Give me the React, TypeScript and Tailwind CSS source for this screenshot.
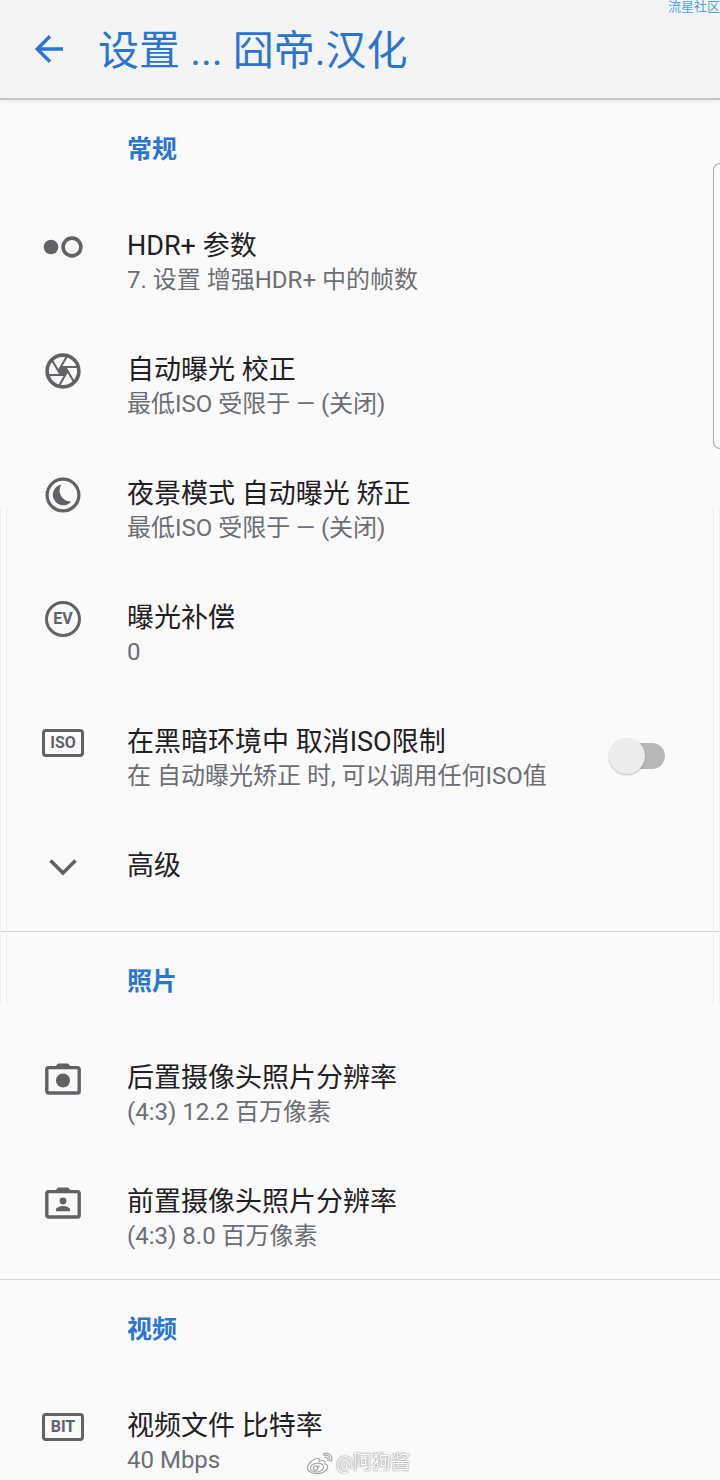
import React, { useState } from 'react';

interface SettingItem {
  id: string;
  title: string;
  summary?: string;
  icon: React.ReactNode;
  toggle?: boolean;
}

interface SettingSection {
  id: string;
  title: string;
  items: SettingItem[];
}

const HdrIcon = () => (
  <svg width="40" height="22" viewBox="0 0 40 22" aria-hidden="true">
    <circle cx="8" cy="11" r="7.3" fill="currentColor" />
    <circle cx="29" cy="11" r="8.9" fill="none" stroke="currentColor" strokeWidth="3.6" />
  </svg>
);

const ApertureIcon = () => (
  <svg width="36" height="36" viewBox="-18 -18 36 36" fill="none" stroke="currentColor" aria-hidden="true">
    <circle r="15.9" strokeWidth="3.6" />
    <path d="M5 0L2.5 4.3H-2.5L-5 0L-2.5 -4.3H2.5Z" fill="currentColor" stroke="none" />
    {[0, 60, 120, 180, 240, 300].map(angle => (
      <path key={angle} d="M-14.5 4H2.3" strokeWidth="2" transform={`rotate(${angle})`} />
    ))}
  </svg>
);

const NightIcon = () => (
  <svg width="36" height="36" viewBox="0 0 36 36" aria-hidden="true">
    <circle cx="18" cy="18" r="15.9" fill="none" stroke="currentColor" strokeWidth="3.2" />
    <path d="M16.5 7.6A10.4 10.4 0 1 0 26.3 24.4A10.8 10.8 0 0 1 16.5 7.6Z" fill="currentColor" />
  </svg>
);

const EvIcon = () => (
  <span className="flex size-9 items-center justify-center rounded-full border-3 border-current text-base font-bold leading-none">
    EV
  </span>
);

const LabelIcon: React.FC<{ text: string }> = ({ text }) => (
  <span className="flex h-7 w-[42px] items-center justify-center rounded border-3 border-current text-base font-bold leading-none">
    {text}
  </span>
);

const ChevronIcon = () => (
  <svg width="28" height="18" viewBox="0 0 28 18" fill="none" stroke="currentColor" strokeWidth="3.6" aria-hidden="true">
    <path d="M1.5 2.5L14 15L26.5 2.5" />
  </svg>
);

const RearCameraIcon = () => (
  <svg width="36" height="34" viewBox="0 0 36 34" aria-hidden="true">
    <path d="M10 5L13 1.5H23L26 5Z" fill="currentColor" />
    <rect x="1.8" y="5.6" width="32.4" height="25.4" rx="1.8" fill="none" stroke="currentColor" strokeWidth="3.4" />
    <circle cx="18" cy="18.5" r="7" fill="currentColor" />
  </svg>
);

const FrontCameraIcon = () => (
  <svg width="36" height="34" viewBox="0 0 36 34" aria-hidden="true">
    <path d="M10 5L13 1.5H23L26 5Z" fill="currentColor" />
    <rect x="1.8" y="5.6" width="32.4" height="25.4" rx="1.8" fill="none" stroke="currentColor" strokeWidth="3.4" />
    <circle cx="18" cy="15" r="3.4" fill="currentColor" />
    <path d="M11 25.2V23.6C11 21.2 15.5 20 18 20S25 21.2 25 23.6V25.2Z" fill="currentColor" />
  </svg>
);

const WeiboIcon = () => (
  <svg width="28" height="24" viewBox="0 0 28 24" fill="none" stroke="#a3a3a3" strokeWidth="1.1" aria-hidden="true">
    <path
      d="M11 7.2C8 7.5 1.5 12.6 1.5 16.6C1.5 20.4 6.3 22.6 11 22.6C17.4 22.6 21.6 19 21.6 16C21.6 14.2 20.1 13.2 18.8 12.8C19.6 10.2 18.2 8.4 13.2 10.2C13.8 8.2 13 7 11 7.2Z"
      fill="#fff"
    />
    <ellipse cx="11" cy="16.6" rx="6.6" ry="4.4" transform="rotate(-8 11 16.6)" />
    <circle cx="9.6" cy="17.2" r="2.2" />
    <circle cx="12.6" cy="15.6" r="0.6" />
    <path d="M17.6 2.6C22.6 0.8 27.4 5.2 25.6 10.2L23.8 9.8C25 6.4 21.8 3.2 18 4.4Z" fill="#fff" />
    <path d="M18.4 6.6C20.8 5.8 22.8 7.8 22 10" />
  </svg>
);

const SECTIONS: SettingSection[] = [
  {
    id: 'general',
    title: '常规',
    items: [
      { id: 'hdr', title: 'HDR+ 参数', summary: '7. 设置 增强HDR+ 中的帧数', icon: <HdrIcon /> },
      { id: 'exposure', title: '自动曝光 校正', summary: '最低ISO 受限于 — (关闭)', icon: <ApertureIcon /> },
      { id: 'night', title: '夜景模式 自动曝光 矫正', summary: '最低ISO 受限于 — (关闭)', icon: <NightIcon /> },
      { id: 'ev', title: '曝光补偿', summary: '0', icon: <EvIcon /> },
      {
        id: 'iso',
        title: '在黑暗环境中 取消ISO限制',
        summary: '在 自动曝光矫正 时, 可以调用任何ISO值',
        icon: <LabelIcon text="ISO" />,
        toggle: true,
      },
      { id: 'advanced', title: '高级', icon: <ChevronIcon /> },
    ],
  },
  {
    id: 'photo',
    title: '照片',
    items: [
      { id: 'rear', title: '后置摄像头照片分辨率', summary: '(4:3) 12.2 百万像素', icon: <RearCameraIcon /> },
      { id: 'front', title: '前置摄像头照片分辨率', summary: '(4:3) 8.0 百万像素', icon: <FrontCameraIcon /> },
    ],
  },
  {
    id: 'video',
    title: '视频',
    items: [{ id: 'bitrate', title: '视频文件 比特率', summary: '40 Mbps', icon: <LabelIcon text="BIT" /> }],
  },
];

const RowContent: React.FC<{ item: SettingItem }> = ({ item }) => (
  <>
    <span className="mr-px flex h-[38px] w-[126px] shrink-0 items-center justify-center text-[#606266]">
      {item.icon}
    </span>
    <span className="flex min-w-0 flex-1 flex-col">
      <span className="text-[27px] leading-9 text-[#1f2022]">{item.title}</span>
      {item.summary && <span className="text-2xl leading-8 text-[#6b6e73]">{item.summary}</span>}
    </span>
  </>
);

const SettingRow: React.FC<{ item: SettingItem }> = ({ item }) => {
  const [checked, setChecked] = useState(false);

  if (item.toggle) {
    return (
      <label className="flex w-full cursor-pointer items-start pt-[29px] pr-[55px] pb-[27px]">
        <RowContent item={item} />
        {/* Interrupteur */}
        <input
          type="checkbox"
          role="switch"
          checked={checked}
          onChange={e => setChecked(e.target.checked)}
          className="relative mt-[19px] h-[26px] w-[54px] shrink-0 cursor-pointer appearance-none rounded-full bg-[#b8b8b8] before:absolute before:-top-[5px] before:-left-0.5 before:size-9 before:rounded-full before:bg-[#ececec] before:shadow-[0_1px_2px_rgba(0,0,0,0.25)] checked:bg-[#8ab4f8] checked:before:left-5 checked:before:bg-[#1a6fd4]"
        />
      </label>
    );
  }

  return (
    <button
      type="button"
      className={`flex w-full cursor-pointer items-start pt-[29px] text-left ${item.summary ? 'pb-[27px]' : 'pb-[45px]'}`}
    >
      <RowContent item={item} />
    </button>
  );
};

const App: React.FC = () => (
  <div className="relative h-screen overflow-hidden bg-[#fafafa] font-[Roboto,'Noto_Sans_CJK_SC',sans-serif]">
    <header className="flex h-[100px] items-center border-b-2 border-[#c6c6c6] bg-[#f4f4f4] pl-[34px] text-[#2a75d0] shadow-[0_1px_4px_rgba(0,0,0,0.08)]">
      <button type="button" aria-label="返回" className="cursor-pointer">
        <svg width="30" height="28" viewBox="0 0 30 28" fill="none" stroke="currentColor" strokeWidth="3.4">
          <path d="M29 14H3M16 1.2L3.2 14L16 26.8" />
        </svg>
      </button>
      <h1 className="ml-[34px] pt-1 text-[41px] leading-none">设置 ... 囧帝.汉化</h1>
    </header>

    <main>
      {SECTIONS.map((section, idx) => (
        <section key={section.id} className={idx > 0 ? 'border-t border-[#d4d4d4]' : ''}>
          <h2 className="pt-[34px] pb-[33px] pl-[127px] text-[25px] leading-8 font-bold text-[#2a75d0]">
            {section.title}
          </h2>
          {section.items.map(item => (
            <SettingRow key={item.id} item={item} />
          ))}
        </section>
      ))}
    </main>

    {/* Panneau latéral et bords de l'écran */}
    <div className="absolute top-[163px] right-0 h-[286px] w-[7px] rounded-l-lg border border-r-0 border-[#a8a8a8]" />
    <div className="absolute top-[508px] left-0 h-[495px] w-[7px] border-x border-[#f0f0f0]" />
    <div className="absolute top-[508px] right-0 h-[495px] w-[7px] border-x border-[#f0f0f0]" />

    {/* Filigranes */}
    <span className="absolute top-0 right-0 text-[13px] leading-[14px] whitespace-nowrap text-[#4ba3ee]">流星社区</span>
    <div className="absolute bottom-[3px] left-[306px] flex items-center gap-0.5">
      <WeiboIcon />
      <span className="text-[19px] leading-7 text-white [text-shadow:0_0_1px_#777,0_0_2px_#999]">@阿狗酱</span>
    </div>
  </div>
);

export default App;
